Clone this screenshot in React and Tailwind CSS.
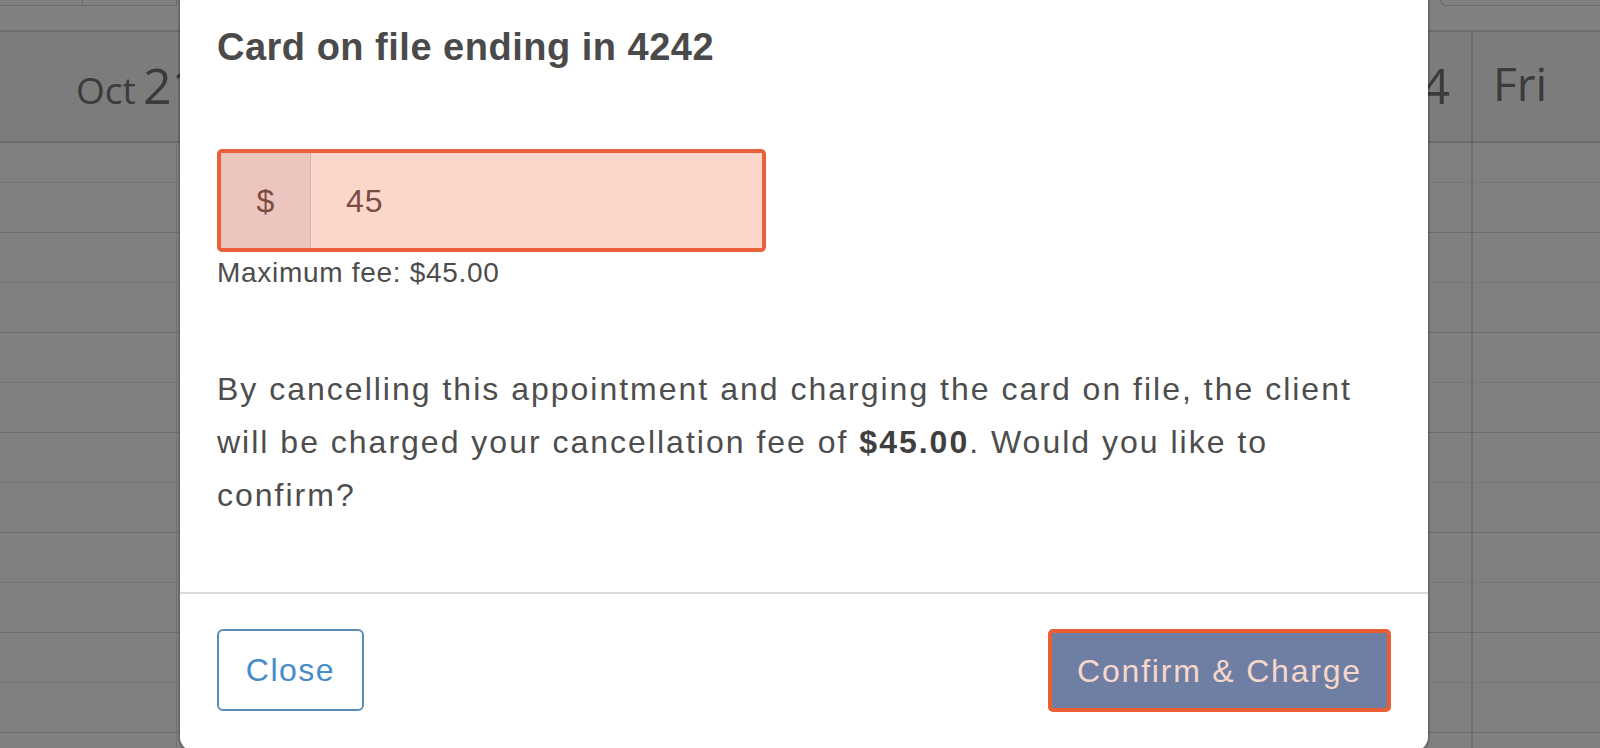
import { useState } from 'react';

const rows = Array.from({ length: 13 }, (_, i) => i);

function CalendarBackdrop() {
  return (
    <div className="flex h-full w-full flex-col bg-[#808080] font-['Open_Sans',sans-serif] text-[#3b3b3b]">
      {/* toolbar remains */}
      <div className="flex h-[32px] shrink-0 items-start border-b-2 border-[#6d6d6d]">
        <div className="flex h-[6px] w-[177px] border-b border-r border-[#6a6a6a]">
          <div className="w-[83px] border-r border-[#6a6a6a]"></div>
        </div>
        <div className="ml-auto h-[6px] w-[160px] rounded-bl-[8px] border-b border-l border-[#6a6a6a]"></div>
      </div>

      {/* day header */}
      <div className="grid h-[111px] shrink-0 grid-cols-[177px_1296px_1fr] border-b-2 border-[#6b6b6b] bg-[#7c7c7c]">
        <div className="flex items-baseline overflow-visible whitespace-nowrap pl-[76px] pt-[28px] leading-none">
          <span className="inline-block w-[67px] shrink-0 text-[37px]">Oct</span>
          <span className="shrink-0 text-[50px]">21</span>
        </div>
        <div className="flex items-baseline justify-end border-r-2 border-[#6b6b6b] pr-[21px] pt-[28px] leading-none">
          <span className="mr-[12px] text-[37px]">Oct</span>
          <span className="text-[50px]">24</span>
        </div>
        <div className="pl-[20px] pt-[28px] text-[46px] leading-none">Fri</div>
      </div>

      {/* time slots */}
      <div className="flex-1 overflow-hidden">
        {rows.map((i) => (
          <div
            key={i}
            className={`grid grid-cols-[177px_1296px_1fr] border-b ${i === 0 ? 'h-[40px]' : 'h-[50px]'} ${
              i % 2 ? 'border-[#6c6c6c]' : 'border-[#777777]'
            }`}
          >
            <div className="border-r border-[#727272]"></div>
            <div className="border-r-2 border-[#6e6e6e]"></div>
            <div></div>
          </div>
        ))}
      </div>
    </div>
  );
}

export default function App() {
  const [fee, setFee] = useState('45');

  return (
    <div className="relative h-[748px] w-[1600px] overflow-hidden font-['Liberation_Sans',Arial,sans-serif]">
      <CalendarBackdrop />

      {/* Cancellation fee modal */}
      <div className="absolute left-[180px] top-0 flex h-[751px] w-[1248px] flex-col rounded-b-[14px] bg-white shadow-[0_0_0_2px_rgba(0,0,0,0.18)]">
        <div className="px-[37px] pt-[28px]">
          <h2 className="text-[38px] font-bold leading-[38px] tracking-[0.5px] text-[#4a4a4a]">
            Card on file ending in 4242
          </h2>

          <div className="mt-[83px] flex h-[103px] w-[549px] overflow-hidden rounded-[5px] border-4 border-[#e9603b]">
            <div className="flex w-[90px] items-center justify-center border-r border-[#d9aea5] bg-[#ecc6be] text-[32px] text-[#7c4c42]">
              $
            </div>
            <input
              className="min-w-0 flex-1 bg-[#fbd6ca] pl-[35px] text-[32px] tracking-[1px] text-[#7c4c42] outline-none"
              value={fee}
              onChange={(e) => setFee(e.target.value)}
            />
          </div>
          <p className="mt-[7px] text-[28px] leading-[28px] tracking-[0.7px] text-[#4d4d4d]">
            Maximum fee: $45.00
          </p>

          <p className="mt-[76px] text-[32px] leading-[53px] tracking-[2px] text-[#4d4d4d]">
            By cancelling this appointment and charging the card on file, the client will be charged your
            cancellation fee of <strong className="font-bold text-[#3f3f3f]">$45.00</strong>. Would you like to
            confirm?
          </p>
        </div>

        <div className="mt-[70px] flex justify-between border-t-2 border-[#dadada] px-[37px] pt-[35px]">
          <button className="h-[82px] w-[147px] rounded-[6px] border-2 border-[#5b8cbb] text-[32px] tracking-[1.5px] text-[#478cc8]">
            Close
          </button>
          <button className="h-[83px] w-[343px] rounded-[5px] border-4 border-[#e95e33] bg-[#6f7fa4] text-[32px] tracking-[1.8px] text-[#f7d6cb]">
            Confirm &amp; Charge
          </button>
        </div>
      </div>
    </div>
  );
}
